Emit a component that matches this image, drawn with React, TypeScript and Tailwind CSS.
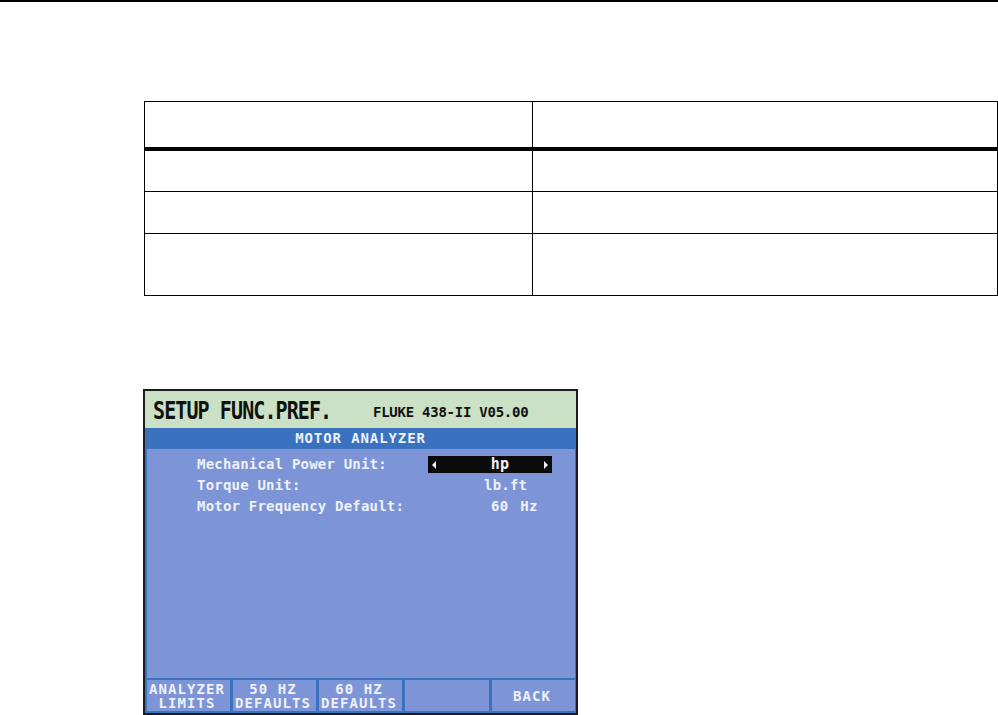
const font = { fontFamily: '"DejaVu Sans Mono", monospace' };

function SoftKey({ lines, width }: { lines: string[]; width: string }) {
  return (
    <div className={`${width} h-full bg-[#7d95d6] flex flex-col items-center justify-center pr-[3px] text-[#eef1fb] text-[14px] leading-[14px] font-bold tracking-[1.1px] whitespace-nowrap`}>
      {lines.map((l) => (
        <div key={l} className="h-[14px]">{l}</div>
      ))}
    </div>
  );
}

export default function App() {
  return (
    <div className="w-[998px] h-[715px] bg-white overflow-hidden relative">
      <div className="h-[2px] bg-black" />
      <div className="ml-[144px] mt-[99px] w-[854px] border-t border-t-black border-l border-l-black border-r border-r-black border-b border-b-black box-border h-[195px] flex flex-col">
        <div className="h-[49px] flex border-b-[4px] border-b-black box-border">
          <div className="w-[388px] border-r border-r-black" />
          <div className="flex-1" />
        </div>
        <div className="h-[41px] flex border-b border-b-black box-border">
          <div className="w-[388px] border-r border-r-black" />
          <div className="flex-1" />
        </div>
        <div className="h-[42px] flex border-b border-b-black box-border">
          <div className="w-[388px] border-r border-r-black" />
          <div className="flex-1" />
        </div>
        <div className="flex-1 flex">
          <div className="w-[388px] border-r border-r-black" />
          <div className="flex-1" />
        </div>
      </div>

      <div
        style={font}
        className="ml-[143px] mt-[93px] w-[435px] h-[326px] border-[2px] border-[#1c1c1c] box-border flex flex-col bg-[#3b72c0]"
      >
        <div className="h-[37px] bg-[#cbe1c5] flex items-center pl-[8px] text-[#111]">
          <span className="w-[220px] text-[20px] font-bold tracking-[-0.9px] whitespace-nowrap scale-y-125 origin-center">SETUP FUNC.PREF.</span>
          <span className="text-[14px] font-bold tracking-[-0.25px] whitespace-nowrap mt-[6px]">FLUKE 438-II V05.00</span>
        </div>
        <div className="h-[21px] flex items-center justify-center text-[#eef1fb] text-[14px] font-bold tracking-[0.9px] whitespace-nowrap">
          MOTOR ANALYZER
        </div>
        <div className="flex-1 ml-[2px] mr-[1px] bg-[#7d95d6] pt-[5px] text-[#eef1fb] text-[14px] font-bold leading-[21px] tracking-[0.2px]">
          <div className="flex h-[21px]">
            <span className="ml-[50px] w-[231px] whitespace-nowrap">Mechanical Power Unit:</span>
            <span className="w-[124px] h-[17px] mt-[2px] bg-[#0b0b0b] flex items-center justify-between px-[4px]">
              <svg width="5" height="8" viewBox="0 0 5 8"><path d="M4 0 L0 4 L4 8 Z" fill="#eef1fb" /></svg>
              <span className="text-[15px] ml-[20px]">hp</span>
              <svg width="5" height="8" viewBox="0 0 5 8"><path d="M1 0 L5 4 L1 8 Z" fill="#eef1fb" /></svg>
            </span>
          </div>
          <div className="flex h-[21px]">
            <span className="ml-[50px] w-[287px]">Torque Unit:</span>
            <span>lb.ft</span>
          </div>
          <div className="flex h-[21px]">
            <span className="ml-[50px] w-[294px] whitespace-nowrap">Motor Frequency Default:</span>
            <span className="flex gap-[12px]">
              <span>60</span>
              <span>Hz</span>
            </span>
          </div>
        </div>
        <div className="h-[35px] pt-[2px] pb-[2px] flex gap-[3px] pl-[2px] pr-[1px]">
          <SoftKey lines={["ANALYZER", "LIMITS"]} width="w-[83px]" />
          <SoftKey lines={["50 HZ", "DEFAULTS"]} width="w-[83px]" />
          <SoftKey lines={["60 HZ", "DEFAULTS"]} width="w-[83px]" />
          <SoftKey lines={[""]} width="w-[84px]" />
          <SoftKey lines={["BACK"]} width="flex-1" />
        </div>
      </div>
    </div>
  );
}
